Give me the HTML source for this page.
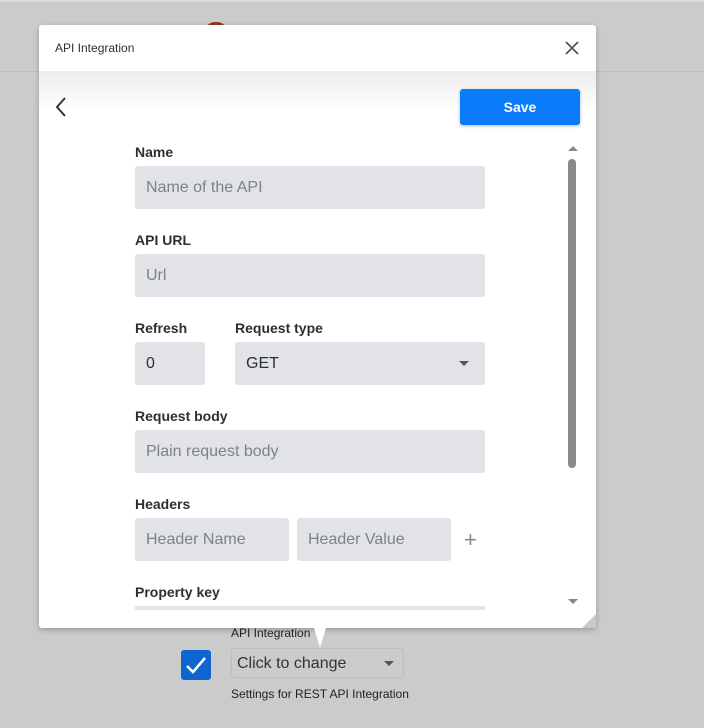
<!DOCTYPE html>
<html><head><style>
*{box-sizing:border-box;margin:0;padding:0}
body{width:704px;height:728px;background:#cbcbcb;font-family:"Liberation Sans",sans-serif;position:relative;overflow:hidden}
.abs{position:absolute}
.lbl{position:absolute;left:135px;font-size:14px;font-weight:bold;color:#2b2f36}
.inp{position:absolute;background:#e1e3e7;border-radius:3px;height:43px;font-size:16px;color:#7d828a;padding:12px 11px;line-height:19px}
</style></head><body>
<div class="abs" style="left:0;top:0;width:704px;height:2px;background:#dcdcdc"></div>
<div class="abs" style="left:0;top:71px;width:704px;height:1px;background:#bdbdbd"></div>
<div class="abs" style="left:205px;top:22px;width:22px;height:10px;background:#8b3a22;border-radius:12px 12px 0 0"></div>
<div class="abs" style="left:39px;top:25px;width:557px;height:603px;background:#fff;border-radius:3px;box-shadow:0 2px 6px rgba(0,0,0,.25);overflow:hidden">
 <div class="abs" style="left:16px;top:16px;font-size:12px;color:#2b2f36">API Integration</div>
 <svg class="abs" style="left:526px;top:16px" width="14" height="14" viewBox="0 0 14 14"><path d="M1 1L13 13M13 1L1 13" stroke="#555" stroke-width="1.8"/></svg>
 <div class="abs" style="left:0;top:46px;width:557px;height:40px;background:linear-gradient(#ececec,#fff)"></div>
 <svg class="abs" style="left:16px;top:72px" width="12" height="20" viewBox="0 0 12 20"><path d="M10 1L2 10L10 19" stroke="#333" stroke-width="2" fill="none"/></svg>
 <div class="abs" style="left:421px;top:64px;width:120px;height:36px;background:#0a7cf9;border-radius:3px;box-shadow:0 1px 3px rgba(0,0,0,.3);color:#fff;font-weight:bold;font-size:14px;text-align:center;line-height:36px">Save</div>
 <div class="abs" style="left:529px;top:134px;width:8px;height:309px;background:#8a8a8a;border-radius:4px"></div>
 <div class="abs" style="left:529px;top:121px;width:0;height:0;border:5px solid transparent;border-bottom-color:#888;border-top:0"></div>
 <div class="abs" style="left:529px;top:574px;width:0;height:0;border:5px solid transparent;border-top-color:#888;border-bottom:0"></div>
 <div class="abs" style="left:543px;top:589px;width:0;height:0;border-left:14px solid transparent;border-bottom:14px solid #c9c9c9"></div>
</div>
<div class="lbl" style="top:144px">Name</div>
<div class="inp" style="left:135px;top:166px;width:350px">Name of the API</div>
<div class="lbl" style="top:232px">API URL</div>
<div class="inp" style="left:135px;top:254px;width:350px">Url</div>
<div class="lbl" style="top:320px">Refresh</div>
<div class="lbl" style="top:320px;left:235px">Request type</div>
<div class="inp" style="left:135px;top:342px;width:70px;color:#2b2f36">0</div>
<div class="inp" style="left:235px;top:342px;width:250px;color:#2b2f36">GET</div>
<div class="abs" style="left:459px;top:361px;border:5px solid transparent;border-top-color:#555;border-bottom:0"></div>
<div class="lbl" style="top:408px">Request body</div>
<div class="inp" style="left:135px;top:430px;width:350px">Plain request body</div>
<div class="lbl" style="top:496px">Headers</div>
<div class="inp" style="left:135px;top:518px;width:154px">Header Name</div>
<div class="inp" style="left:297px;top:518px;width:154px">Header Value</div>
<div class="abs" style="left:464px;top:527px;font-size:22px;color:#888">+</div>
<div class="lbl" style="top:584px">Property key</div>
<div class="abs" style="left:135px;top:606px;width:350px;height:4px;background:#e1e3e7"></div>
<div class="abs" style="left:310px;top:628px;border-left:10px solid transparent;border-right:10px solid transparent;border-top:20px solid #fff;transform:scaleX(.6)"></div>
<div class="abs" style="left:231px;top:626px;font-size:12px;color:#222">API Integration</div>
<div class="abs" style="left:181px;top:650px;width:30px;height:30px;background:#0f66d0;border-radius:3px"></div>
<svg class="abs" style="left:185px;top:655px" width="22" height="20" viewBox="0 0 22 20"><path d="M2 11L8 17L20 3" stroke="#fff" stroke-width="2.5" fill="none"/></svg>
<div class="abs" style="left:231px;top:648px;width:173px;height:30px;border:1px solid #bdbdbd;border-radius:3px;font-size:16px;color:#333;padding:6px 5px">Click to change</div>
<div class="abs" style="left:384px;top:661px;border:5px solid transparent;border-top-color:#555;border-bottom:0"></div>
<div class="abs" style="left:231px;top:687px;font-size:12px;color:#222">Settings for REST API Integration</div>
</body></html>
